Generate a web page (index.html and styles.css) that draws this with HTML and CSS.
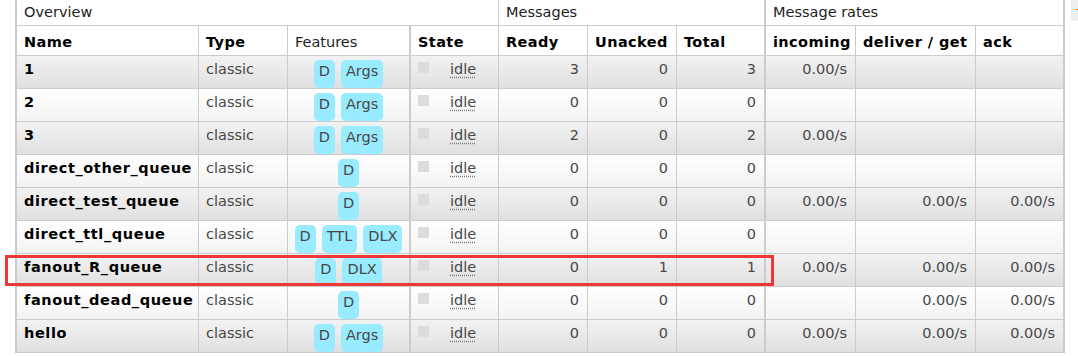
FILE: index.html
```html
<!DOCTYPE html>
<html>
<head>
<meta charset="utf-8">
<title>Queues</title>
<link rel="stylesheet" href="styles.css">
</head>
<body>
<div class="page">
  <div class="grid">
    <div class="row head group">
      <div class="cell span4">Overview</div>
      <div class="cell span3">Messages</div>
      <div class="cell span3 sep last">Message rates</div>
    </div>
    <div class="row head">
      <div class="cell">Name</div>
      <div class="cell">Type</div>
      <div class="cell plain">Features</div>
      <div class="cell sep">State</div>
      <div class="cell">Ready</div>
      <div class="cell">Unacked</div>
      <div class="cell">Total</div>
      <div class="cell sep">incoming</div>
      <div class="cell">deliver / get</div>
      <div class="cell last">ack</div>
    </div>

    <div class="row alt1">
      <div class="cell name">1</div>
      <div class="cell">classic</div>
      <div class="cell feat"><span class="badge">D</span><span class="badge">Args</span></div>
      <div class="cell sep state"><span class="key"></span><abbr class="idle">idle</abbr></div>
      <div class="cell num">3</div><div class="cell num">0</div><div class="cell num">3</div>
      <div class="cell num sep">0.00/s</div><div class="cell num"></div><div class="cell num last"></div>
    </div>
    <div class="row alt2">
      <div class="cell name">2</div>
      <div class="cell">classic</div>
      <div class="cell feat"><span class="badge">D</span><span class="badge">Args</span></div>
      <div class="cell sep state"><span class="key"></span><abbr class="idle">idle</abbr></div>
      <div class="cell num">0</div><div class="cell num">0</div><div class="cell num">0</div>
      <div class="cell num sep"></div><div class="cell num"></div><div class="cell num last"></div>
    </div>
    <div class="row alt1">
      <div class="cell name">3</div>
      <div class="cell">classic</div>
      <div class="cell feat"><span class="badge">D</span><span class="badge">Args</span></div>
      <div class="cell sep state"><span class="key"></span><abbr class="idle">idle</abbr></div>
      <div class="cell num">2</div><div class="cell num">0</div><div class="cell num">2</div>
      <div class="cell num sep">0.00/s</div><div class="cell num"></div><div class="cell num last"></div>
    </div>
    <div class="row alt2">
      <div class="cell name">direct_other_queue</div>
      <div class="cell">classic</div>
      <div class="cell feat"><span class="badge">D</span></div>
      <div class="cell sep state"><span class="key"></span><abbr class="idle">idle</abbr></div>
      <div class="cell num">0</div><div class="cell num">0</div><div class="cell num">0</div>
      <div class="cell num sep"></div><div class="cell num"></div><div class="cell num last"></div>
    </div>
    <div class="row alt1">
      <div class="cell name">direct_test_queue</div>
      <div class="cell">classic</div>
      <div class="cell feat"><span class="badge">D</span></div>
      <div class="cell sep state"><span class="key"></span><abbr class="idle">idle</abbr></div>
      <div class="cell num">0</div><div class="cell num">0</div><div class="cell num">0</div>
      <div class="cell num sep">0.00/s</div><div class="cell num">0.00/s</div><div class="cell num last">0.00/s</div>
    </div>
    <div class="row alt2">
      <div class="cell name">direct_ttl_queue</div>
      <div class="cell">classic</div>
      <div class="cell feat"><span class="badge">D</span><span class="badge">TTL</span><span class="badge">DLX</span></div>
      <div class="cell sep state"><span class="key"></span><abbr class="idle">idle</abbr></div>
      <div class="cell num">0</div><div class="cell num">0</div><div class="cell num">0</div>
      <div class="cell num sep"></div><div class="cell num"></div><div class="cell num last"></div>
    </div>
    <div class="row alt1">
      <div class="cell name">fanout_R_queue</div>
      <div class="cell">classic</div>
      <div class="cell feat"><span class="badge">D</span><span class="badge">DLX</span></div>
      <div class="cell sep state"><span class="key"></span><abbr class="idle">idle</abbr></div>
      <div class="cell num">0</div><div class="cell num">1</div><div class="cell num">1</div>
      <div class="cell num sep">0.00/s</div><div class="cell num">0.00/s</div><div class="cell num last">0.00/s</div>
    </div>
    <div class="row alt2">
      <div class="cell name">fanout_dead_queue</div>
      <div class="cell">classic</div>
      <div class="cell feat"><span class="badge">D</span></div>
      <div class="cell sep state"><span class="key"></span><abbr class="idle">idle</abbr></div>
      <div class="cell num">0</div><div class="cell num">0</div><div class="cell num">0</div>
      <div class="cell num sep"></div><div class="cell num">0.00/s</div><div class="cell num last">0.00/s</div>
    </div>
    <div class="row alt1">
      <div class="cell name">hello</div>
      <div class="cell">classic</div>
      <div class="cell feat"><span class="badge">D</span><span class="badge">Args</span></div>
      <div class="cell sep state"><span class="key"></span><abbr class="idle">idle</abbr></div>
      <div class="cell num">0</div><div class="cell num">0</div><div class="cell num">0</div>
      <div class="cell num sep">0.00/s</div><div class="cell num">0.00/s</div><div class="cell num last">0.00/s</div>
    </div>
  </div>
  <div class="toggle">+/-</div>
  <div class="highlight"></div>
</div>
</body>
</html>
```

FILE: styles.css
```css
html, body {
  margin: 0;
  padding: 0;
  background: #fff;
  overflow: hidden;
}
body {
  font-family: "DejaVu Sans", Verdana, sans-serif;
  font-size: 14.5px;
  color: #484848;
}
.page {
  position: relative;
  display: flex;
  align-items: flex-start;
  margin-top: -4px;
  padding-left: 15px;
}
.grid {
  flex-shrink: 0;
  display: grid;
  grid-template-columns: 182px 89px 122px 89px 89px 89px 88px 91px 120px 87px;
  grid-template-rows: 30px 30px repeat(9, 33px);
  border-left: 2px solid #ccc;
  border-right: 2px solid #ccc;
}
.row { display: contents; }
.cell {
  box-sizing: border-box;
  border-right: 1px solid #ccc;
  border-bottom: 1px solid #ccc;
  padding: 5px 7px 0;
  line-height: 17px;
  white-space: nowrap;
}
.span4 { grid-column: span 4; }
.span3 { grid-column: span 3; }
.sep { border-left: 1px solid #ccc; }
.last { border-right: none; }
.head .cell {
  padding-top: 7px;
  line-height: 18px;
  background: #fff;
  color: #000;
  font-weight: bold;
  letter-spacing: 0.4px;
}
.head .cell.plain,
.group .cell {
  font-weight: normal;
  color: #222;
  letter-spacing: 0;
}
.alt1 > .cell { background: linear-gradient(#f2f2f2, #e0e0e0); }
.alt2 > .cell { background: linear-gradient(#ffffff, #f3f3f3); }
.name {
  font-weight: bold;
  color: #000;
  letter-spacing: 0.6px;
}
.num {
  text-align: right;
  padding-right: 8px;
}
.feat {
  display: flex;
  justify-content: center;
  gap: 6px;
  padding: 4px 0 0;
}
.badge {
  background: #99ebff;
  border-radius: 5px;
  padding: 2px 5px;
  line-height: 18px;
  color: #484848;
}
.state {
  display: flex;
  align-items: flex-start;
}
.key {
  width: 11px;
  height: 11px;
  margin-top: 1px;
  background: #dcdcdc;
  flex-shrink: 0;
}
.idle {
  margin-left: 21px;
  text-decoration: underline dotted #777;
  text-underline-offset: 3px;
}
.toggle {
  flex-shrink: 0;
  margin-left: 6px;
  margin-top: 4px;
  height: 21px;
  padding: 0 4px;
  background: #eee;
  color: #f60;
  font-size: 12px;
  line-height: 21px;
}
.highlight {
  position: absolute;
  left: 5px;
  top: 259px;
  width: 769px;
  height: 31px;
  box-sizing: border-box;
  border: 3px solid #ee3838;
}
```
